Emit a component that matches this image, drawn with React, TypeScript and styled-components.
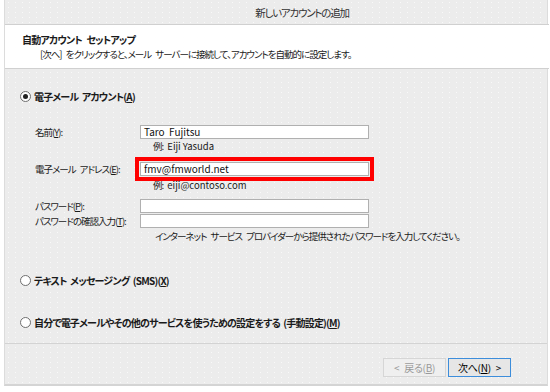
import React from "react";
import styled, { createGlobalStyle } from "styled-components";

const GlobalStyle = createGlobalStyle`
  html, body {
    margin: 0;
    padding: 0;
    background: #ffffff;
  }
  body {
    width: 550px;
    height: 392px;
    overflow: hidden;
    font-family: "Noto Sans CJK JP", "Noto Sans", sans-serif;
    font-feature-settings: "palt";
    font-size: 9.5px;
    letter-spacing: -1px;
    word-spacing: 3px;
    color: #1a1a1a;
  }
`;

const dotted = `
  background-color: #ececec;
  background-image: radial-gradient(rgba(255, 255, 255, 0.7) 0.6px, transparent 0.8px);
  background-size: 7px 5px;
`;

const Window = styled.div`
  ${dotted}
  height: 386px;
  box-sizing: border-box;
  border-left: 1px solid #dcdcdc;
  border-right: 1px solid #dcdcdc;
  border-bottom: 2px solid #d4d4d4;
  margin-left: 4px;
  margin-right: 2px;
  display: flex;
  flex-direction: column;
`;

const TitleBar = styled.div`
  height: 24px;
  display: flex;
  align-items: center;
  justify-content: center;
  padding-left: 52px;
  font-size: 10.5px;
  letter-spacing: -1.2px;
  color: #333333;
`;

const Header = styled.div`
  background: #ffffff;
  height: 45px;
  box-sizing: border-box;
  border-top: 1px solid #d0d0d0;
  border-bottom: 1px solid #d0d0d0;
  margin-right: -2px;
  padding: 7px 0 0 17px;
  display: flex;
  flex-direction: column;
`;

const HeaderTitle = styled.div`
  font-weight: bold;
  font-size: 10px;
  letter-spacing: -0.8px;
  line-height: 15px;
`;

const HeaderDesc = styled.div`
  padding-left: 18px;
  line-height: 15px;
`;

const Body = styled.div`
  flex: 1;
  padding: 20px 0 0 15px;
  display: flex;
  flex-direction: column;
`;

const RadioRow = styled.label<{ $top: number }>`
  display: flex;
  align-items: center;
  gap: 3px;
  height: 14px;
  margin-top: ${p => p.$top}px;
  font-weight: bold;
  font-size: 10px;
  letter-spacing: -0.8px;
  word-spacing: 2px;
  white-space: nowrap;
`;

const RadioCircle = styled.span<{ $checked?: boolean }>`
  width: 9px;
  height: 9px;
  border-radius: 50%;
  border: 1px solid #6f6f6f;
  background: #ffffff;
  display: inline-flex;
  align-items: center;
  justify-content: center;

  &::after {
    content: "";
    width: 5px;
    height: 5px;
    border-radius: 50%;
    background: ${p => (p.$checked ? "#222222" : "transparent")};
  }
`;

const Form = styled.div`
  display: grid;
  grid-template-columns: 105px 229px;
  align-items: center;
  margin: 22px 0 0 15px;
`;

const Label = styled.div<{ $top?: number }>`
  height: 14px;
  line-height: 14px;
  white-space: nowrap;
  margin-top: ${p => p.$top ?? 0}px;
`;

const Field = styled.div<{ $top?: number }>`
  height: 14px;
  box-sizing: border-box;
  background: #ffffff;
  border: 1px solid #b0b0b0;
  padding: 0 3px;
  line-height: 12px;
  font-size: 10px;
  letter-spacing: 0;
  word-spacing: 0;
  color: #111111;
  white-space: pre;
  margin-top: ${p => p.$top ?? 0}px;
`;

const Highlight = styled.div`
  margin: 4px -5px 0 -5px;
  border: 4px solid #ff0000;
  padding: 1px;
`;

const Hint = styled.div<{ $top?: number; $indent?: number }>`
  grid-column: 2;
  padding-left: ${p => p.$indent ?? 13}px;
  line-height: 14px;
  margin-top: ${p => p.$top ?? 0}px;
  white-space: nowrap;
`;

const Latin = styled.span`
  letter-spacing: 0;
  word-spacing: 0;
  font-size: 9.5px;
`;

const Footer = styled.div`
  border-top: 1px solid #d3d3d3;
  height: 41px;
  box-sizing: border-box;
  display: flex;
  justify-content: flex-end;
  align-items: center;
  padding: 6px 36px 0 0;
  gap: 2px;
`;

const Button = styled.button<{ $primary?: boolean }>`
  width: 63px;
  height: 19px;
  box-sizing: border-box;
  font-family: inherit;
  font-feature-settings: "palt";
  font-size: 10px;
  letter-spacing: -0.3px;
  word-spacing: 3px;
  padding: 0;
  background: ${p => (p.$primary ? "#e6e6e6" : "#efefef")};
  border: 1px solid ${p => (p.$primary ? "#3c8ddb" : "#d6d6d6")};
  color: ${p => (p.$primary ? "#000000" : "#9a9a9a")};
  display: flex;
  align-items: center;
  justify-content: center;
`;

const Under = styled.span`
  text-decoration: underline;
`;

const BottomStrip = styled.div`
  height: 6px;
  background: #ffffff;
`;

export default function App() {
  return (
    <>
      <GlobalStyle />
      <Window>
        <TitleBar>新しいアカウントの追加</TitleBar>
        <Header>
          <HeaderTitle>自動アカウント セットアップ</HeaderTitle>
          <HeaderDesc>[次へ] をクリックすると、メール サーバーに接続して、アカウントを自動的に設定します。</HeaderDesc>
        </Header>
        <Body>
          <RadioRow $top={0}>
            <RadioCircle $checked />
            <span>電子メール アカウント(<Under>A</Under>)</span>
          </RadioRow>
          <Form>
            <Label>名前(<Under>Y</Under>):</Label>
            <Field>Taro  Fujitsu</Field>
            <Hint>例: <Latin>Eiji Yasuda</Latin></Hint>
            <Label $top={4}>電子メール アドレス(<Under>E</Under>):</Label>
            <Highlight>
              <Field>fmv@fmworld.net</Field>
            </Highlight>
            <Hint $top={-3}>例: <Latin>eiji@contoso.com</Latin></Hint>
            <Label $top={7}>パスワード(<Under>P</Under>):</Label>
            <Field $top={7}> </Field>
            <Label $top={1}>パスワードの確認入力(<Under>T</Under>):</Label>
            <Field $top={1}> </Field>
            <Hint $indent={15} $top={1}>インターネット サービス プロバイダーから提供されたパスワードを入力してください。</Hint>
          </Form>
          <RadioRow $top={30}>
            <RadioCircle />
            <span>テキスト メッセージング (SMS)(<Under>X</Under>)</span>
          </RadioRow>
          <RadioRow $top={28}>
            <RadioCircle />
            <span>自分で電子メールやその他のサービスを使うための設定をする (手動設定)(<Under>M</Under>)</span>
          </RadioRow>
        </Body>
        <Footer>
          <Button disabled>&lt; 戻る(<Under>B</Under>)</Button>
          <Button $primary>次へ(<Under>N</Under>) &gt;</Button>
        </Footer>
      </Window>
      <BottomStrip />
    </>
  );
}
